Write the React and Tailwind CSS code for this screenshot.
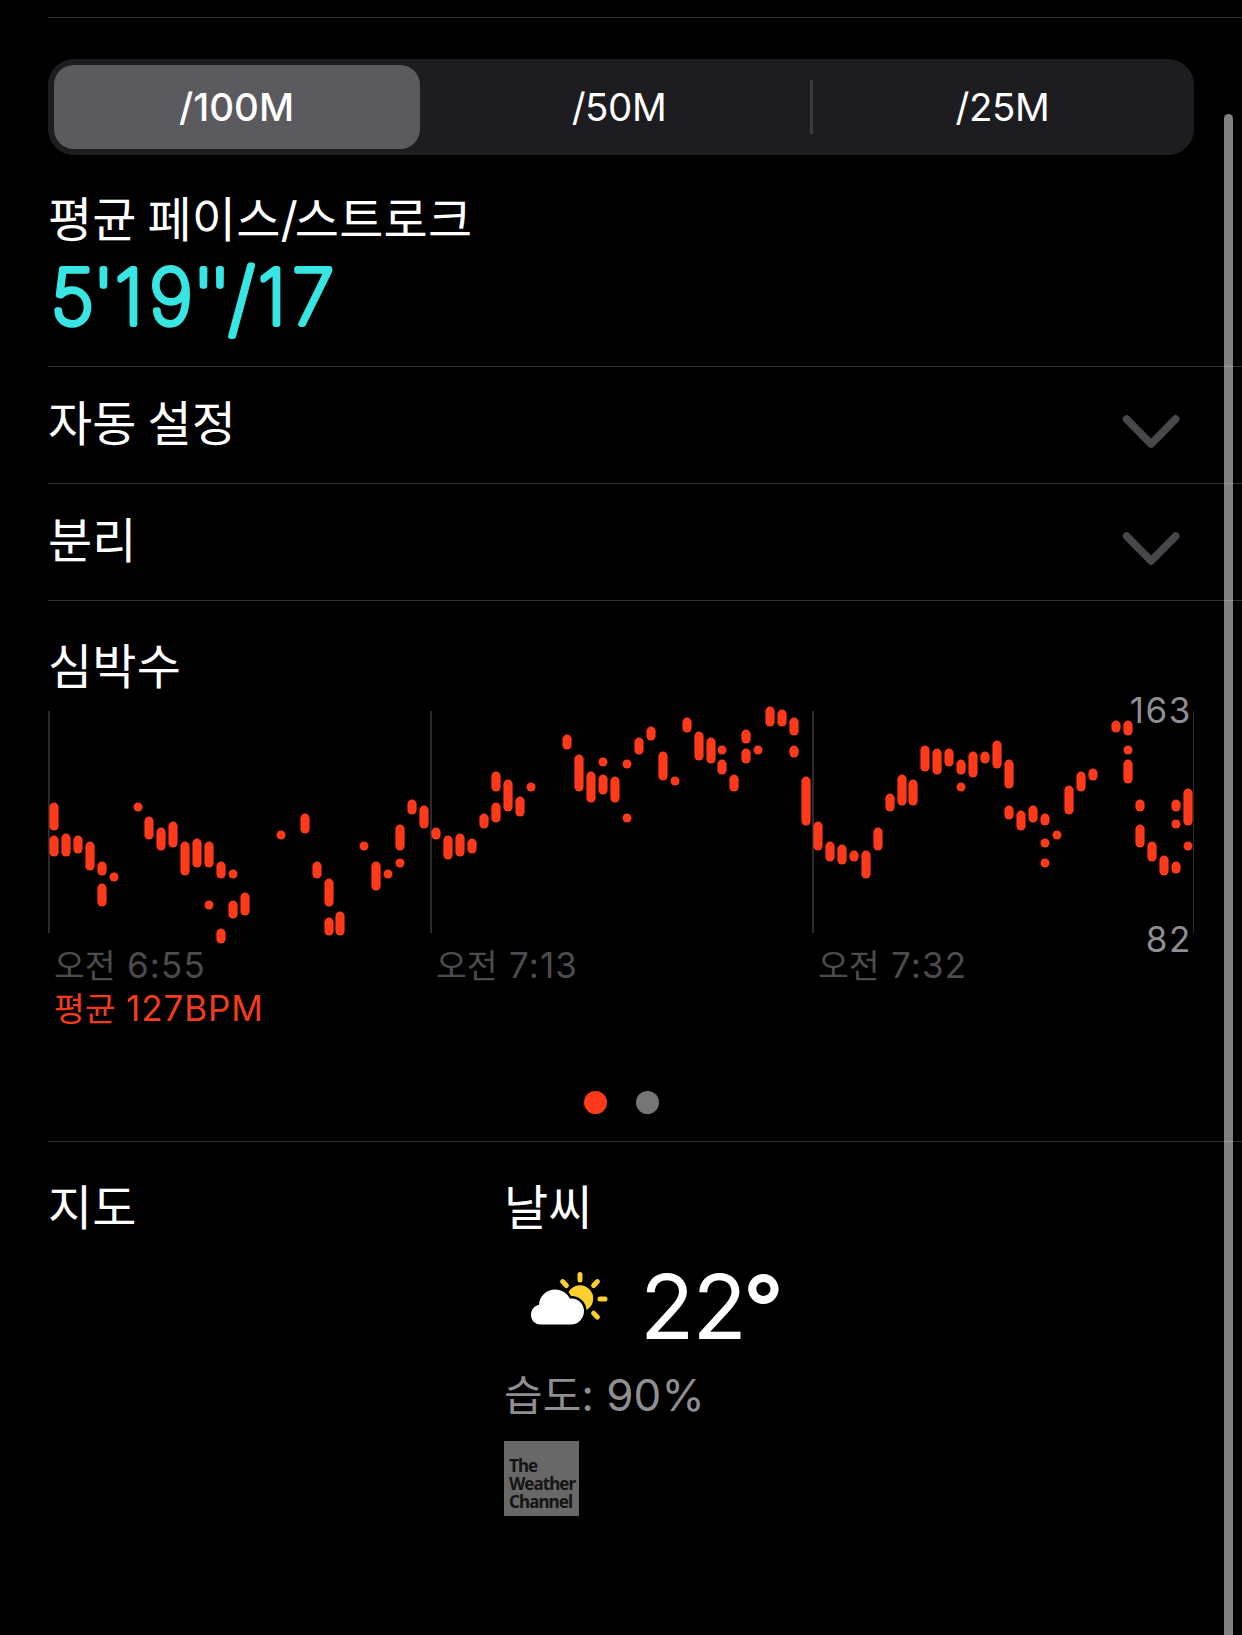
const TABS = ["/100M", "/50M", "/25M"];

// [x, top, bottom] of every heart rate range
const RANGES = [
  [54, 112, 140], [54, 145, 166], [66, 143, 166], [78, 145, 163], [90, 151, 180],
  [102, 171, 185], [102, 193, 216], [149, 126, 149], [161, 137, 160], [173, 131, 157],
  [185, 151, 185], [197, 148, 177], [209, 151, 177], [221, 171, 188], [221, 238, 253],
  [233, 210, 228], [245, 202, 225], [305, 123, 143], [317, 171, 188], [329, 188, 216],
  [329, 227, 245], [340, 221, 245], [376, 171, 200], [400, 134, 160], [412, 109, 124],
  [424, 115, 138], [436, 137, 149], [448, 145, 169], [460, 143, 166], [472, 148, 163],
  [484, 123, 138], [496, 81, 101], [496, 112, 132], [508, 89, 121], [520, 106, 126],
  [567, 44, 59], [579, 64, 101], [591, 81, 112], [603, 84, 104], [615, 86, 112],
  [639, 47, 64], [651, 36, 50], [663, 61, 90], [687, 27, 42], [699, 41, 70],
  [711, 47, 73], [722, 69, 84], [734, 84, 101], [746, 39, 53], [746, 58, 73],
  [770, 16, 36], [782, 19, 36], [794, 27, 45], [794, 55, 67], [806, 86, 135],
  [818, 131, 160], [830, 151, 171], [842, 154, 174], [854, 160, 171], [866, 160, 188],
  [878, 137, 160], [890, 103, 121], [902, 84, 115], [913, 89, 115], [925, 55, 81],
  [937, 58, 84], [949, 58, 76], [961, 69, 84], [973, 61, 87], [985, 61, 73],
  [997, 50, 78], [1009, 69, 98], [1009, 115, 129], [1021, 120, 140], [1033, 115, 132],
  [1045, 123, 135], [1069, 95, 124], [1081, 81, 101], [1093, 78, 90], [1116, 30, 42],
  [1128, 30, 45], [1128, 69, 93], [1140, 109, 121], [1140, 134, 157], [1152, 151, 171],
  [1164, 165, 185], [1176, 109, 121], [1176, 171, 183], [1188, 98, 135],
];

// single readings
const POINTS = [
  [114, 187], [138, 117], [209, 215], [233, 184], [281, 145], [364, 156], [388, 184],
  [400, 173], [531, 97], [603, 72], [627, 74], [627, 128], [675, 91], [722, 60],
  [758, 60], [961, 97], [1045, 153], [1045, 173], [1057, 145], [1128, 60],
  [1176, 134], [1188, 156],
];

const TIMES = ["6:55", "7:13", "7:32"];

function Title({ children }) {
  return (
    <h2 className="text-[48px] leading-[60px] tracking-[0.2px] [word-spacing:-3px] whitespace-nowrap">{children}</h2>
  );
}

function CollapsedRow({ label }) {
  return (
    <div className="ml-12 h-[117px] border-b border-[#303032] pt-[27px] pr-[62px] flex justify-between">
      <Title>{label}</Title>
      <svg width="60" height="40" viewBox="0 0 60 40" className="mt-[17px]" fill="none">
        <path
          d="M6.5 8 L31.1 33 L55.7 8"
          stroke="#48474c"
          strokeWidth="7.5"
          strokeLinecap="round"
          strokeLinejoin="round"
        />
      </svg>
    </div>
  );
}

function HeartRateChart() {
  return (
    <div className="relative w-[1146px] h-[260px]">
      <svg width="1146" height="260" viewBox="48 0 1146 260">
        <g fill="#2b2b2d">
          <rect x="48" y="21" width="2" height="222" />
          <rect x="430" y="21" width="2" height="222" />
          <rect x="812" y="21" width="2" height="222" />
          <rect x="1193" y="21" width="1" height="222" />
        </g>
        <g fill="#ff3a1a">
          {RANGES.map(([x, top, bottom]) => (
            <rect key={`${x}-${top}`} x={x - 4.6} y={top + 0.6} width="9.2" height={bottom - top} rx="4.6" />
          ))}
          {POINTS.map(([x, y]) => (
            <circle key={`${x}-${y}`} cx={x} cy={y} r="4.5" />
          ))}
        </g>
      </svg>
      <span className="absolute right-[2px] -top-px text-[35px] leading-[42px] tracking-[1.6px] text-[#8e8e93]">163</span>
      <span className="absolute right-[2px] top-[228px] text-[35px] leading-[42px] tracking-[1.6px] text-[#8e8e93]">82</span>
    </div>
  );
}

function PartlyCloudy() {
  return (
    <svg width="78" height="56" viewBox="0 0 78 56">
      <g stroke="#fdd02e" strokeWidth="5" strokeLinecap="round">
        <path d="M50 4.5v5.5M32.6 11.6l3.8 3.9M67.4 11.6l-3.8 3.9M70 29h5M63.6 43.2l3.8 3.8" />
      </g>
      <circle cx="50" cy="28.5" r="13.2" fill="#fdd02e" />
      <path
        d="M10.5 54.5C4.800 54.5 1 50 1 45 1 39.600 4.500 35.500 9 35 9.300 26 16.500 19.500 25 19.500c6.700 0 12 3.500 14.800 9C47.800 27.500 54 33.500 54 41c0 7.500-5.500 13.5-13 13.5Z"
        fill="#fff"
        stroke="#000"
        strokeWidth="5"
        paintOrder="stroke"
      />
    </svg>
  );
}

export default function App() {
  return (
    <div className="relative w-[1242px] h-[1635px] overflow-hidden bg-black text-white font-['Inter','Noto_Sans_CJK_KR',sans-serif]">
      <div className="ml-12 h-[18px] border-b border-[#303032]" />

      <div className="ml-12 mt-[41px] flex h-24 w-[1146px] rounded-[26px] bg-[#1d1c20] p-1.5 text-[38.5px]">
        {TABS.map((tab, i) => (
          <div
            key={tab}
            className={
              i === 0
                ? "flex w-[366px] items-center justify-center rounded-[20px] bg-[#5b5a5f] pt-[2px] pr-[1px] font-medium"
                : i === 1
                  ? "my-[15px] flex w-[393px] items-center justify-center border-r-3 border-[#3b3b3f] pt-[2px] pl-[8px] tracking-[-0.4px]"
                  : "flex w-[375px] items-center justify-center pt-[2px] pl-[4px] tracking-[-0.4px]"
            }
          >
            {tab}
          </div>
        ))}
      </div>

      <div className="ml-12 h-[212px] border-b border-[#303032] pt-[35px]">
        <Title>
          평균 페이스<span className="tracking-[-3px]">/</span>스트로크
        </Title>
        <svg width="300" height="96" viewBox="0 0 300 96" className="overflow-visible">
          <text
            y="74"
            fill="#37e6e3"
            stroke="#37e6e3"
            strokeWidth="6"
            strokeLinejoin="round"
            className="text-[76px] font-thin"
          >
            <tspan x="3 45 67 101.5 145 161.5">5'19''</tspan>
            <tspan x="180.5" y="77" className="text-[81px]">/</tspan>
            <tspan x="210 244.5" y="74">17</tspan>
          </text>
        </svg>
      </div>

      <CollapsedRow label="자동 설정" />
      <CollapsedRow label="분리" />

      <section className="ml-12 h-[541px] border-b border-[#303032] pt-[36px]">
        <Title>심박수</Title>
        <div className="-mt-[7px]">
          <HeartRateChart />
        </div>
        <div className="-mt-[6px] flex h-[42px] text-[33.500px] leading-[42px] text-[#4c4c4e]">
          {TIMES.map((time) => (
            <div key={time} className="w-[382px] pl-[6px] [word-spacing:2px]">
              오전 <span className="text-[35px] tracking-[1.1px]">{time}</span>
            </div>
          ))}
        </div>
        <p className="h-[44px] pl-[6px] pt-px text-[33.500px] leading-[42px] text-[#f33c1c] [word-spacing:1px]">
          평균 <span className="text-[35px] tracking-[0.9px]">127BPM</span>
        </p>
        <div className="mt-[61px] flex gap-[29px] pl-[536px]">
          <span className="size-[23px] rounded-full bg-[#ff3a1a]" />
          <span className="size-[23px] rounded-full bg-[#767676]" />
        </div>
      </section>

      <section className="ml-12 flex pt-[36px]">
        <div className="w-[456px]">
          <Title>지도</Title>
        </div>
        <div>
          <Title>날씨</Title>
          <div className="mt-[10px] flex h-[104px] pl-[26px]">
            <div className="mt-[22px]">
              <PartlyCloudy />
            </div>
            <span className="ml-[32px] mt-[7px] text-[89px] leading-[104px] tracking-[-1.8px]">
              22<span className="-ml-[2px] font-semibold">°</span>
            </span>
          </div>
          <p className="mt-[15px] text-[42px] leading-[56px] text-[#8e8e93]">
            습도<span className="text-[44px]">: 90%</span>
          </p>
          <p className="mt-[17px] size-[75px] bg-[#686868] pl-[5px] pt-[16px] font-['Noto_Sans',sans-serif] text-[17px] font-bold leading-[18px] text-[#141414] tracking-[-0.9px]">
            The
            <br />
            Weather
            <br />
            Channel
          </p>
        </div>
      </section>

      {/* scroll indicator */}
      <div className="absolute right-[9px] top-[114px] h-[1540px] w-[9px] rounded-full bg-white/50" />
    </div>
  );
}
